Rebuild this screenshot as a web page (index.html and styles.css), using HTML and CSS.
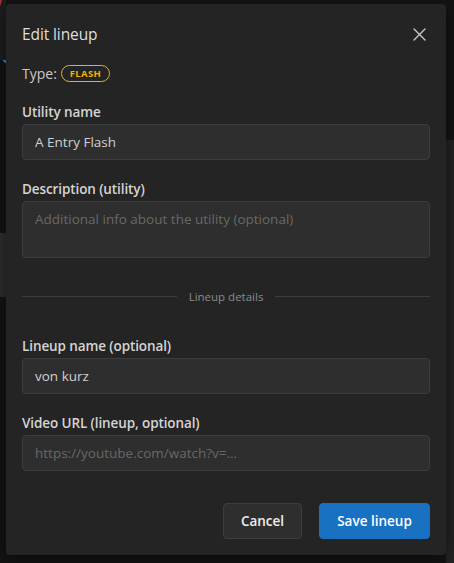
FILE: index.html
```html
<!DOCTYPE html>
<html lang="en">
<head>
<meta charset="utf-8">
<title>Edit lineup</title>
<link rel="stylesheet" href="styles.css">
</head>
<body>
<div class="map" aria-hidden="true">
  <div class="map-patch patch-right"></div>
  <div class="map-patch patch-left"></div>
  <div class="map-patch patch-left-top"></div>
  <div class="map-line"></div>
  <div class="map-pin"></div>
</div>

<div class="overlay">
  <section class="modal" role="dialog" aria-labelledby="modal-title">
    <header class="modal-header">
      <h2 class="modal-title" id="modal-title">Edit lineup</h2>
      <button class="close-btn" aria-label="Close">
        <svg viewBox="0 0 15 15" width="15" height="15"><path d="M2 2 L13 13 M13 2 L2 13" stroke="currentColor" stroke-width="1.4" fill="none" stroke-linecap="round"/></svg>
      </button>
    </header>

    <div class="modal-body">
      <div class="type-row">
        <span class="type-label">Type:</span>
        <span class="badge">FLASH</span>
      </div>

      <div class="field first">
        <label class="field-label">Utility name</label>
        <div class="input">A Entry Flash</div>
      </div>

      <div class="field">
        <label class="field-label">Description (utility)</label>
        <div class="input textarea placeholder">Additional info about the utility (optional)</div>
      </div>

      <div class="divider">
        <span class="divider-line"></span>
        <span class="divider-label">Lineup details</span>
        <span class="divider-line"></span>
      </div>

      <div class="field">
        <label class="field-label">Lineup name (optional)</label>
        <div class="input">von kurz</div>
      </div>

      <div class="field">
        <label class="field-label">Video URL (lineup, optional)</label>
        <div class="input placeholder">https://youtube.com/watch?v=...</div>
      </div>

      <div class="actions">
        <button class="btn btn-default">Cancel</button>
        <button class="btn btn-primary">Save lineup</button>
      </div>
    </div>
  </section>
</div>
</body>
</html>
```

FILE: styles.css
```css
* { box-sizing: border-box; }

html, body {
  margin: 0;
  padding: 0;
  width: 454px;
  height: 563px;
  overflow: hidden;
}

body {
  background: #141414;
  font-family: "Open Sans", "Noto Sans", "Liberation Sans", sans-serif;
  color: #c9c9c9;
  position: relative;
}

/* background map (free canvas) */
.map {
  position: absolute;
  inset: 0;
  z-index: 0;
}
.map-patch { position: absolute; }
.patch-right {
  left: 446px; top: 140px; width: 8px; height: 423px;
  background: #242424;
}
.patch-left {
  left: 0; top: 233px; width: 6px; height: 64px;
  background: #2f2f2f;
}
.patch-left-top {
  left: 0; top: 0; width: 6px; height: 60px;
  background: #1e1e1e;
}
.map-line {
  left: 446px; top: 24px; width: 2px; height: 40px;
  background: #b0303a;
  transform: rotate(18deg);
  transform-origin: top;
}
.map-pin {
  left: 446px; top: 6px; width: 18px; height: 24px;
  border-radius: 50%;
  background: #b8922a;
  border: 2px solid #2b7fd8;
}

.overlay {
  position: relative;
  z-index: 1;
  padding: 4px 8px 0 6px;
}

.modal {
  width: 440px;
  height: 551px;
  background: #242424;
  border-radius: 4px;
  box-shadow: 0 4px 18px rgba(0,0,0,0.5);
  display: flex;
  flex-direction: column;
}

.modal-header {
  height: 62px;
  padding: 2px 16px 0;
  display: flex;
  align-items: center;
  justify-content: space-between;
}

.modal-title {
  margin: 0;
  font-size: 15.5px;
  font-weight: 400;
  color: #dedede;
  letter-spacing: -0.1px;
}

.close-btn {
  width: 28px;
  height: 28px;
  margin-right: -3px;
  border: 0;
  background: transparent;
  color: #c9c9c9;
  display: flex;
  align-items: center;
  justify-content: center;
  padding: 0;
}

.modal-body {
  padding: 0 16px 16px;
  display: flex;
  flex-direction: column;
}

.type-row {
  display: flex;
  align-items: center;
  gap: 4px;
  height: 22px;
  margin-top: 0;
  font-size: 14px;
  color: #c9c9c9;
}

.badge {
  display: inline-flex;
  align-items: center;
  height: 17px;
  padding: 0 8px;
  border: 1px solid #f5b000;
  border-radius: 999px;
  color: #f5b000;
  font-size: 9.5px;
  font-weight: 700;
  letter-spacing: 0.3px;
}

.field {
  display: flex;
  flex-direction: column;
  margin-top: 18px;
}
.field.first { margin-top: 17px; }

.field-label {
  font-size: 13.5px;
  font-weight: 600;
  line-height: 22px;
  color: #d4d4d4;
  margin-bottom: 1px;
  letter-spacing: -0.1px;
}

.input {
  height: 36px;
  padding: 0 12px;
  background: #2e2e2e;
  border: 1px solid #3d3d3d;
  border-radius: 4px;
  font-size: 13.5px;
  line-height: 34px;
  color: #d0d0d0;
  white-space: nowrap;
}

.textarea {
  height: 57px;
  line-height: 20px;
  padding-top: 7px;
}

.placeholder { color: #686868; }

.divider {
  display: flex;
  align-items: center;
  gap: 12px;
  margin-top: 28px;
  height: 20px;
}
.divider-line {
  flex: 1;
  height: 1px;
  background: #3d3d3d;
}
.divider-label {
  font-size: 11.5px;
  color: #8a8a8a;
}

.divider + .field { margin-top: 29px; }

.actions {
  display: flex;
  justify-content: flex-end;
  gap: 17px;
  margin-top: 32px;
}

.btn {
  height: 36px;
  padding: 0;
  border-radius: 4px;
  font-family: inherit;
  font-size: 13.5px;
  font-weight: 600;
  color: #ffffff;
  white-space: nowrap;
  cursor: pointer;
}
.btn-default {
  width: 79px;
  background: #2e2e2e;
  border: 1px solid #3d3d3d;
  color: #eeeeee;
}
.btn-primary {
  width: 111px;
  background: #1971c2;
  border: 1px solid #1971c2;
}
```
